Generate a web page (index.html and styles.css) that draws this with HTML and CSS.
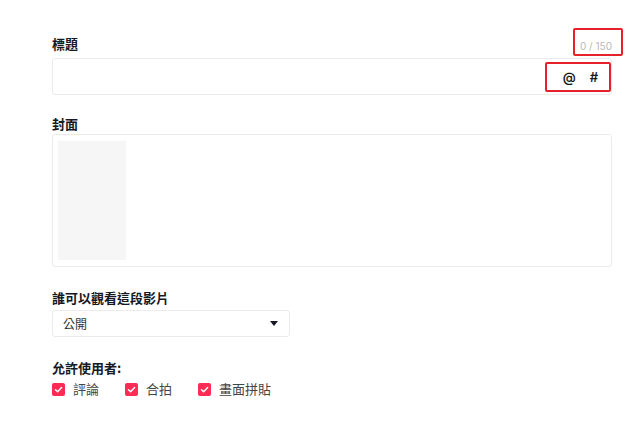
FILE: index.html
```html
<!DOCTYPE html>
<html lang="zh-Hant">
<head>
    <meta charset="UTF-8">
    <meta name="viewport" content="width=device-width, initial-scale=1.0">
    <title>上傳影片</title>
    <link rel="stylesheet" href="styles.css">
</head>
<body>
    <div class="form">
        <div class="title-row">
            <label class="field-label">標題</label>
            <span class="counter">0 / 150</span>
        </div>
        <div class="title-input">
            <span class="tool">@</span>
            <span class="tool">#</span>
        </div>

        <label class="field-label cover-label">封面</label>
        <div class="cover-box">
            <div class="cover-thumb"></div>
        </div>

        <label class="field-label section-label">誰可以觀看這段影片</label>
        <div class="select">
            <span>公開</span>
            <span class="caret"></span>
        </div>

        <label class="field-label section-label">允許使用者:</label>
        <div class="checks">
            <div class="check"><span class="box"><svg viewBox="0 0 13 13" width="13" height="13"><path d="M3.5 6.8 L5.6 8.8 L9.6 4.6" fill="none" stroke="#fff" stroke-width="1.5" stroke-linecap="round" stroke-linejoin="round"/></svg></span>評論</div>
            <div class="check"><span class="box"><svg viewBox="0 0 13 13" width="13" height="13"><path d="M3.5 6.8 L5.6 8.8 L9.6 4.6" fill="none" stroke="#fff" stroke-width="1.5" stroke-linecap="round" stroke-linejoin="round"/></svg></span>合拍</div>
            <div class="check"><span class="box"><svg viewBox="0 0 13 13" width="13" height="13"><path d="M3.5 6.8 L5.6 8.8 L9.6 4.6" fill="none" stroke="#fff" stroke-width="1.5" stroke-linecap="round" stroke-linejoin="round"/></svg></span>畫面拼貼</div>
        </div>

        <!-- annotation marks -->
        <div class="mark mark-counter"></div>
        <div class="mark mark-tools"></div>
    </div>
</body>
</html>
```

FILE: styles.css
```css
body {
    margin: 0;
    background: #fff;
    font-family: "Noto Sans CJK TC", "Noto Sans", sans-serif;
    color: #161823;
}
.form {
    position: relative;
    width: 560px;
    padding: 36px 0 0 52px;
}
.field-label {
    display: block;
    font-size: 13px;
    line-height: 16px;
    font-weight: 700;
}
.title-row {
    display: flex;
    justify-content: space-between;
    align-items: flex-end;
    height: 16px;
}
.counter {
    font-family: "Inter", "Noto Sans", sans-serif;
    font-size: 10px;
    line-height: 14px;
    color: #b8b8bc;
    margin-bottom: -1px;
}
.title-input {
    box-sizing: border-box;
    height: 37px;
    margin-top: 6px;
    border: 1px solid #ebebeb;
    border-radius: 3px;
    display: flex;
    justify-content: flex-end;
    align-items: center;
    gap: 14px;
    padding-right: 13px;
}
.tool {
    font-family: "Inter", "Noto Sans", sans-serif;
    font-size: 13px;
    font-weight: 600;
    color: #161823;
}
.cover-label {
    margin-top: 21px;
}
.cover-box {
    box-sizing: border-box;
    height: 133px;
    margin-top: 2px;
    border: 1px solid #ebebeb;
    border-radius: 3px;
    padding: 6px 5px;
}
.cover-thumb {
    width: 68px;
    height: 119px;
    background: #f6f6f6;
}
.section-label {
    margin-top: 23px;
}
.select {
    box-sizing: border-box;
    width: 238px;
    height: 27px;
    margin-top: 4px;
    border: 1px solid #ebebeb;
    border-radius: 3px;
    display: flex;
    justify-content: space-between;
    align-items: center;
    padding: 0 11px 0 10px;
    font-size: 12px;
    color: #333;
}
.caret {
    width: 0;
    height: 0;
    border-left: 4px solid transparent;
    border-right: 4px solid transparent;
    border-top: 5px solid #161823;
}
.checks {
    display: flex;
    gap: 26px;
    margin-top: 5px;
}
.check {
    display: flex;
    align-items: center;
    gap: 8px;
    font-size: 13px;
    line-height: 16px;
    color: #444;
}
.box {
    width: 13px;
    height: 13px;
    border-radius: 2px;
    background: #fe2c55;
    display: flex;
}
.mark {
    position: absolute;
    border: 2px solid #e8202a;
    border-radius: 2px;
    box-sizing: border-box;
}
.mark-counter {
    left: 573px;
    top: 28px;
    width: 50px;
    height: 28px;
}
.mark-tools {
    left: 545px;
    top: 62px;
    width: 66px;
    height: 30px;
}
```
